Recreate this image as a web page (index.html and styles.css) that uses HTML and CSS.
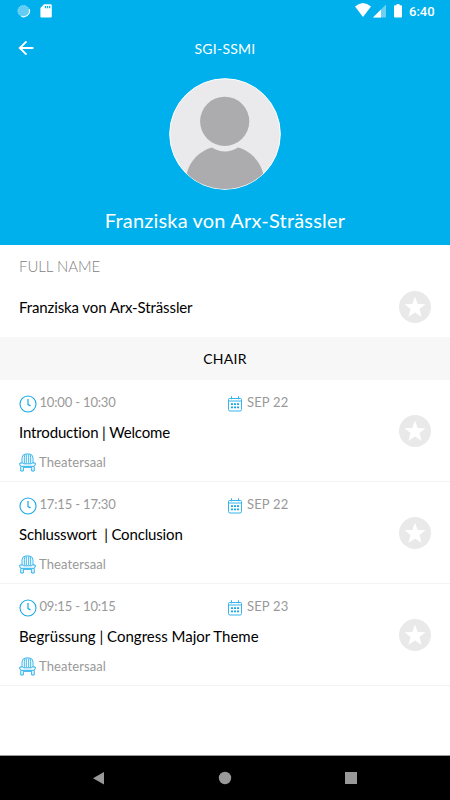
FILE: index.html
```html
<!DOCTYPE html>
<html lang="de">
<head>
<meta charset="utf-8">
<title>SGI-SSMI</title>
<link rel="stylesheet" href="styles.css">
</head>
<body>
<svg class="defs" width="0" height="0" aria-hidden="true">
  <symbol id="star" viewBox="0 0 32 32"><circle cx="16" cy="16" r="16" fill="#e9e9e9"/><path fill="#fff" d="M16 5.800l2.700 7.100 7.800.3-6 4.800 2 7.700-6.500-4.300-6.500 4.300 2-7.700-6-4.800 7.800-.3z"/></symbol>
  <symbol id="clock" viewBox="0 0 18 18"><circle cx="9" cy="9" r="8" fill="none" stroke="#18a9e8" stroke-width="1.100"/><path d="M9 4v5.600l2.500 1.300" fill="none" stroke="#18a9e8" stroke-width="1.200"/></symbol>
  <symbol id="calendar" viewBox="0 0 14 16"><path d="M1.500 2.500h11q1 0 1 1v10q0 1.500-1.500 1.500H2Q.5 15 .5 13.500v-10q0-1 1-1zM.5 5h13M3.500.3v3M10.500.3v3" fill="none" stroke="#35b4eb"/><path d="M3 7.300h2v1.700H3zM6 7.300h2v1.700H6zM9 7.300h2v1.700H9zM3 10.500h2v1.700H3zM6 10.500h2v1.700H6zM9 10.500h2v1.700H9z" fill="#18a9e8"/></symbol>
  <symbol id="chair" viewBox="0 0 18 19"><g fill="none" stroke="#25aeea"><path d="M3 10V5Q3.500 1 6.500 1h4Q13.500 1 14 5v5M5.300 10V4.500Q5.500 2 6.300 1.500M7.300 10V1.500M9.700 10V1.500M11.700 10V4.500Q11.500 2 10.700 1.500" stroke-width=".9"/><path d="M.8 10h3l1 .8h7.400l1-.8h3v2l-1.200 1.300H2L.8 12zM1.800 13.300v4.700h2.500v-3.700h8.400v3.700h2.500v-4.700"/></g></symbol>
</svg>
<div class="screen">
  <header class="hero">
    <div class="status">
      <svg class="sys" width="60" height="24" viewBox="0 0 60 24"><circle cx="23.500" cy="11" r="5.600" fill="#62cdf2" stroke="#9be0f7" stroke-dasharray="1.200 .8"/><path d="M29.300 9a6 6 0 0 1-8 7.300" fill="none" stroke="#e8f8fe" stroke-width="1.200"/><path fill="#fff" d="M44 4.300h6.500q1.300 0 1.300 1.300v10.600q0 1.300-1.300 1.300h-8.900q-1.200 0-1.200-1.300V8z"/><path fill="#00b0ec" d="M44.800 6h1.300v2.200h-1.300zM46.900 6h1.300v2.200h-1.300zM49 6h1.300v2.200H49z"/></svg>
      <svg class="sys" width="54" height="24" viewBox="0 0 54 24"><path fill="#fff" d="M0 6.500Q8-.5 16 6.500L8 17z"/><path fill="#70d0f3" d="M31 4.500V17.500H18z"/><path fill="#fff" d="M26 9.500v8h-8zM41.500 4h3v1.200h1.500q1 0 1 1v10.300q0 1-1 1h-6q-1 0-1-1V6.200q0-1 1-1h1.500z"/></svg>
      <span class="clock">6:40</span>
    </div>
    <div class="bar">
      <svg class="back" width="16" height="16" viewBox="0 0 16 16"><path d="M15.500 8H1.800M8.500 1.300L1.800 8l6.700 6.700" fill="none" stroke="#fff" stroke-width="1.900"/></svg>
      <span class="bar-title">SGI-SSMI</span>
    </div>
    <svg class="avatar" width="112" height="112" viewBox="0 0 112 112"><defs><clipPath id="disc"><circle cx="56" cy="56" r="55"/></clipPath></defs><circle cx="56" cy="56" r="55.300" fill="#eaeaec" stroke="#fff"/><g clip-path="url(#disc)" fill="#acacae"><path d="M17.500 97C20 84 30 73 43 69.600Q56 77.400 69 69.600C82 73 92 84 94.500 97V112h-77z"/><circle cx="55.700" cy="43.300" r="24.600"/></g></svg>
    <h1 class="name"><span>Franziska von Arx-Strässler</span></h1>
  </header>
  <section class="full">
    <div class="label">FULL NAME</div>
    <div class="full-row"><span class="person">Franziska von Arx-Strässler</span><svg class="star"><use href="#star"/></svg></div>
  </section>
  <h2 class="section"><span>CHAIR</span></h2>
  <ul class="list">
    <li class="item">
      <div class="info">
        <div class="meta"><svg class="i-clock"><use href="#clock"/></svg><span class="time">10:00 - 10:30</span><svg class="i-cal"><use href="#calendar"/></svg><span class="date">SEP 22</span></div>
        <div class="title t1">Introduction | Welcome</div>
        <div class="place"><svg class="i-chair"><use href="#chair"/></svg><span>Theatersaal</span></div>
      </div>
      <svg class="star"><use href="#star"/></svg>
    </li>
    <li class="item">
      <div class="info">
        <div class="meta"><svg class="i-clock"><use href="#clock"/></svg><span class="time">17:15 - 17:30</span><svg class="i-cal"><use href="#calendar"/></svg><span class="date">SEP 22</span></div>
        <div class="title t2">Schlusswort  | Conclusion</div>
        <div class="place"><svg class="i-chair"><use href="#chair"/></svg><span>Theatersaal</span></div>
      </div>
      <svg class="star"><use href="#star"/></svg>
    </li>
    <li class="item">
      <div class="info">
        <div class="meta"><svg class="i-clock"><use href="#clock"/></svg><span class="time">09:15 - 10:15</span><svg class="i-cal"><use href="#calendar"/></svg><span class="date">SEP 23</span></div>
        <div class="title t3">Begrüssung | Congress Major Theme</div>
        <div class="place"><svg class="i-chair"><use href="#chair"/></svg><span>Theatersaal</span></div>
      </div>
      <svg class="star"><use href="#star"/></svg>
    </li>
  </ul>
  <nav class="nav">
    <svg width="14" height="14"><path fill="#999" d="M12 1v12.500L1 7.200z"/></svg>
    <svg width="14" height="14"><circle cx="7" cy="7" r="6.200" fill="#999"/></svg>
    <svg width="14" height="14"><path fill="#999" d="M1 1h12v12H1z"/></svg>
  </nav>
</div>
</body>
</html>
```
FILE: styles.css
```css
* { box-sizing: border-box; }
body { margin: 0; background: #fff; font-family: Lato, "Liberation Sans", sans-serif; color: #000; font-variant-ligatures: none; }
svg { display: block; flex: none; }
.defs { position: absolute; }
h1, h2, ul { margin: 0; padding: 0; font-weight: 400; }
.screen { width: 450px; height: 800px; display: flex; flex-direction: column; white-space: nowrap; overflow: hidden; }

.hero { height: 245px; background: #00b0ec; color: #fff; display: flex; flex-direction: column; align-items: center; }
.status { width: 100%; height: 24px; display: flex; align-items: center; padding-right: 15px; }
.status .sys:nth-child(2) { margin-left: auto; }
.clock { font: 500 13px/24px Roboto, sans-serif; width: 26px; }
.bar { width: 100%; height: 48px; display: grid; grid-template-columns: 1fr auto 1fr; align-items: center; padding: 0 18px; }
.bar-title { font-size: 14px; letter-spacing: .25px; }
.avatar { margin-top: 6px; }
.name { font-size: 20px; line-height: 30px; margin-top: 15px; letter-spacing: .19px; }

.full { height: 92px; padding: 11px 19px 0; }
.label { font-size: 15px; line-height: 20px; color: #828282; font-weight: 300; letter-spacing: -.05px; }
.full-row { display: flex; justify-content: space-between; align-items: center; margin-top: 15px; font-size: 15px; }
.person { letter-spacing: -.11px; }
.star { width: 32px; height: 32px; }
.section { height: 43px; background: #f7f7f7; font-size: 14px; line-height: 43px; text-align: center; letter-spacing: .3px; }

.list { list-style: none; flex: 1; }
.item { height: 102px; border-bottom: 1px solid #f3f3f3; padding: 12px 19px 0; display: flex; justify-content: space-between; }
.item .star { margin-top: 23px; }
.meta { display: flex; align-items: center; height: 20px; font-size: 13px; color: #999; line-height: 20px; }
.i-clock { width: 18px; height: 18px; margin: 3px 3px 0 -.5px; }
.time { width: 188.5px; letter-spacing: -.17px; }
.i-cal { width: 14px; height: 16px; margin: 3px 5px 0 0; }
.date { letter-spacing: .15px; }
.title { font-size: 15px; line-height: 20px; margin-top: 10px; white-space: pre; }
.t1 { letter-spacing: -.15px; }
.t2 { letter-spacing: -.16px; }
.place { display: flex; align-items: center; margin-top: 9px; font-size: 13px; line-height: 20px; color: #999; letter-spacing: .1px; }
.i-chair { width: 18px; height: 19px; margin: 2px 2px 0 0; }

.nav { height: 45px; background: #000; border-top: 1px solid #999; display: flex; justify-content: space-between; align-items: center; padding: 0 92px; }
```
